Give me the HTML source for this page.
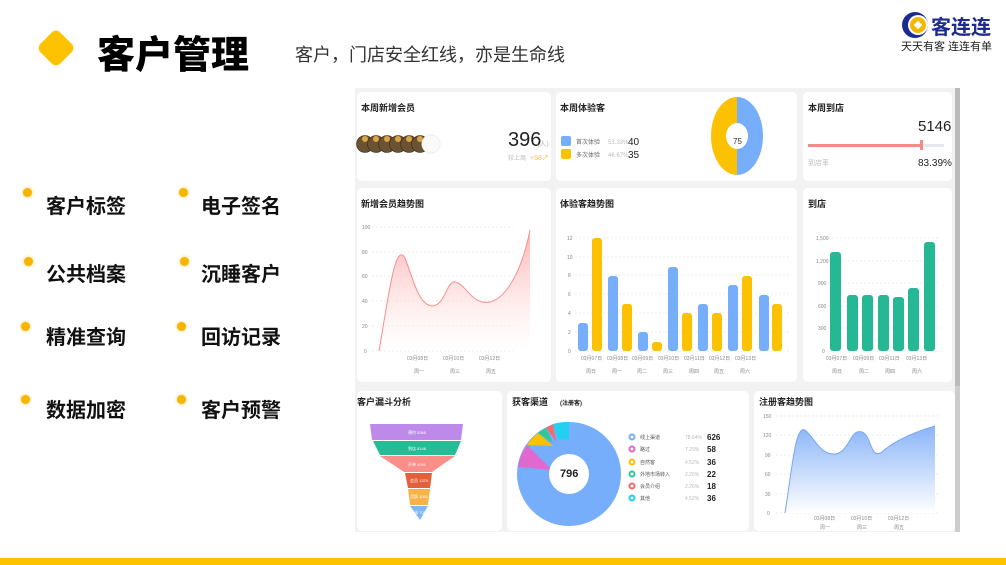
<!DOCTYPE html>
<html><head><meta charset="utf-8"><style>
body{margin:0;width:1006px;height:565px;background:#fff;position:relative;overflow:hidden;font-family:"Liberation Sans","Noto Sans CJK SC",sans-serif}
.t{position:absolute;white-space:nowrap}
.dot{position:absolute;width:9px;height:9px;border-radius:50%;background:#f7b500;box-shadow:0 0 3px #f7c94a}
.li{position:absolute;font-size:20px;font-weight:bold;color:#111}
</style></head><body>
<div style="position:absolute;left:42px;top:34px;width:28px;height:28px;background:#fdc300;border-radius:6px;transform:rotate(45deg)"></div>
<div class="t" style="left:97px;top:24px;font-size:38px;font-weight:900;color:#000">客户管理</div>
<div class="t" style="left:295px;top:41px;font-size:18px;color:#333">客户，门店安全红线，亦是生命线</div>
<svg style="position:absolute;left:898px;top:10px" width="40" height="30"><circle cx="17" cy="15" r="13" fill="#1d2a8f"/><circle cx="20" cy="15" r="10" fill="#fff"/><circle cx="20" cy="15" r="8" fill="#f6b700"/><rect x="17" y="12" width="6" height="6" fill="#fff" transform="rotate(45 20 15)"/></svg>
<div class="t" style="left:931px;top:11px;font-size:20px;font-weight:bold;color:#1d2a8f">客连连</div>
<div class="t" style="left:901px;top:38px;font-size:11px;color:#222">天天有客 连连有单</div>
<div class="dot" style="left:23px;top:188px"></div><div class="li" style="left:46px;top:190px">客户标签</div>
<div class="dot" style="left:179px;top:188px"></div><div class="li" style="left:201px;top:190px">电子签名</div>
<div class="dot" style="left:24px;top:257px"></div><div class="li" style="left:46px;top:258px">公共档案</div>
<div class="dot" style="left:180px;top:257px"></div><div class="li" style="left:201px;top:258px">沉睡客户</div>
<div class="dot" style="left:21px;top:322px"></div><div class="li" style="left:46px;top:321px">精准查询</div>
<div class="dot" style="left:177px;top:322px"></div><div class="li" style="left:201px;top:321px">回访记录</div>
<div class="dot" style="left:21px;top:395px"></div><div class="li" style="left:46px;top:394px">数据加密</div>
<div class="dot" style="left:177px;top:395px"></div><div class="li" style="left:201px;top:394px">客户预警</div>
<div style="position:absolute;left:0;top:558px;width:1006px;height:7px;background:#fdc300"></div>
<svg style="position:absolute;left:0;top:0" width="1006" height="565" font-family="Liberation Sans,Noto Sans CJK SC,sans-serif">
<defs>
<linearGradient id="gr" x1="0" y1="0" x2="0" y2="1"><stop offset="0" stop-color="#f99" stop-opacity=".75"/><stop offset="1" stop-color="#fff" stop-opacity=".3"/></linearGradient>
<linearGradient id="gb" x1="0" y1="0" x2="0" y2="1"><stop offset="0" stop-color="#8ab4f8"/><stop offset="1" stop-color="#fff"/></linearGradient>
</defs>
<rect x="355" y="88" width="605" height="300" fill="#f2f2f2"/>
<rect x="355" y="386" width="605" height="146" fill="#f2f2f2"/>
<rect x="955" y="88" width="5" height="300" fill="#bbb"/>
<g fill="#fff">
<rect x="357" y="92" width="194" height="89" rx="5"/><rect x="556" y="92" width="241" height="89" rx="5"/><rect x="803" y="92" width="149" height="89" rx="5"/>
<rect x="357" y="188" width="194" height="194" rx="5"/><rect x="556" y="188" width="241" height="194" rx="5"/><rect x="803" y="188" width="149" height="194" rx="5"/>
<rect x="357" y="391" width="145" height="140" rx="5"/><rect x="507" y="391" width="242" height="140" rx="5"/><rect x="754" y="391" width="201" height="140" rx="5"/>
</g>
<g font-size="9" font-weight="bold" fill="#222">
<text x="361" y="111">本周新增会员</text><text x="560" y="111">本周体验客</text><text x="808" y="111">本周到店</text>
<text x="361" y="207">新增会员趋势图</text><text x="560" y="207">体验客趋势图</text><text x="808" y="207">到店</text>
<text x="357" y="405">客户漏斗分析</text><text x="512" y="405">获客渠道</text><text x="759" y="405">注册客趋势图</text>
</g>
<g fill="#6b5232" stroke="#3a2a18" stroke-width=".6"><circle cx="365" cy="144" r="8.5"/><circle cx="376" cy="144" r="8.5"/><circle cx="387" cy="144" r="8.5"/><circle cx="398" cy="144" r="8.5"/><circle cx="409" cy="144" r="8.5"/><circle cx="420" cy="144" r="8.5"/></g>
<g fill="#d9a54a"><circle cx="365" cy="139" r="3"/><circle cx="376" cy="139" r="3"/><circle cx="387" cy="139" r="3"/><circle cx="398" cy="139" r="3"/><circle cx="409" cy="139" r="3"/><circle cx="420" cy="139" r="3"/></g>
<circle cx="431" cy="144" r="9" fill="#fafafa" stroke="#eee"/>
<text x="508" y="146" font-size="20" fill="#222">396</text><text x="537" y="146" font-size="7" fill="#bbb">(人)</text>
<text x="508" y="160" font-size="6" fill="#bbb">较上周</text><text x="530" y="160" font-size="7" fill="#f9c23c">+58↗</text>
<rect x="561" y="136" width="10" height="10" rx="2" fill="#76aefb"/><rect x="561" y="149" width="10" height="10" rx="2" fill="#fcc100"/>
<g font-size="6" fill="#666"><text x="576" y="144">首次体验</text><text x="576" y="157">多次体验</text></g>
<g font-size="6" fill="#bbb"><text x="608" y="144">53.33%</text><text x="608" y="157">46.67%</text></g>
<g font-size="10" fill="#222"><text x="628" y="145">40</text><text x="628" y="158">35</text></g>
<path d="M737 97 A26 39 0 0 1 737 175 Z" fill="#76aefb"/><path d="M737 97 A26 39 0 0 0 737 175 Z" fill="#fcc100"/>
<ellipse cx="737" cy="136" rx="11" ry="13" fill="#fff"/><text x="733" y="144" font-size="8" fill="#333">75</text>
<text x="918" y="131" font-size="15" fill="#222">5146</text>
<rect x="808" y="144" width="136" height="3" fill="#e5e7ee"/><rect x="808" y="144" width="113" height="3" fill="#f48b88"/><rect x="920" y="140" width="3" height="10" fill="#f48b88"/>
<text x="808" y="165" font-size="7" fill="#bbb">到店率</text><text x="918" y="166" font-size="10" fill="#222">83.39%</text>
<g stroke="#ddd" stroke-dasharray="2,2" stroke-width=".6"><line x1="372" y1="227" x2="513" y2="227"/><line x1="372" y1="252" x2="513" y2="252"/><line x1="372" y1="276" x2="513" y2="276"/><line x1="372" y1="301" x2="513" y2="301"/><line x1="372" y1="326" x2="513" y2="326"/><line x1="372" y1="351" x2="513" y2="351"/></g>
<g font-size="5" fill="#888"><text x="362" y="229">100</text><text x="362" y="254">80</text><text x="362" y="278">60</text><text x="362" y="303">40</text><text x="362" y="328">20</text><text x="364" y="353">0</text>
<text x="407" y="360">03月08日</text><text x="443" y="360">03月10日</text><text x="479" y="360">03月12日</text><text x="414" y="373">周一</text><text x="450" y="373">周三</text><text x="486" y="373">周五</text></g>
<path d="M379 351 C388 300,395 240,405 258 C412 275,418 305,432 306 C445 306,447 280,455 282 C465 284,470 300,483 302 C500 306,520 280,530 230 L530 351 Z" fill="url(#gr)"/>
<path d="M379 351 C388 300,395 240,405 258 C412 275,418 305,432 306 C445 306,447 280,455 282 C465 284,470 300,483 302 C500 306,520 280,530 230" fill="none" stroke="#f78e8e"/>
<g stroke="#ddd" stroke-dasharray="2,2" stroke-width=".6"><line x1="575" y1="238" x2="790" y2="238"/><line x1="575" y1="257" x2="790" y2="257"/><line x1="575" y1="275" x2="790" y2="275"/><line x1="575" y1="294" x2="790" y2="294"/><line x1="575" y1="313" x2="790" y2="313"/><line x1="575" y1="332" x2="790" y2="332"/><line x1="575" y1="351" x2="790" y2="351"/></g>
<g font-size="5" fill="#888"><text x="567" y="240">12</text><text x="567" y="259">10</text><text x="568" y="277">8</text><text x="568" y="296">6</text><text x="568" y="315">4</text><text x="568" y="334">2</text><text x="568" y="353">0</text>
<text x="581" y="360">03月07日</text><text x="607" y="360">03月08日</text><text x="632" y="360">03月09日</text><text x="658" y="360">03月10日</text><text x="684" y="360">03月11日</text><text x="709" y="360">03月12日</text><text x="735" y="360">03月13日</text>
<text x="586" y="373">周日</text><text x="612" y="373">周一</text><text x="637" y="373">周二</text><text x="663" y="373">周三</text><text x="689" y="373">周四</text><text x="714" y="373">周五</text><text x="740" y="373">周六</text></g>
<g fill="#76aefb"><rect x="578" y="323" width="10" height="28" rx="3"/><rect x="608" y="276" width="10" height="75" rx="3"/><rect x="638" y="332" width="10" height="19" rx="3"/><rect x="668" y="267" width="10" height="84" rx="3"/><rect x="698" y="304" width="10" height="47" rx="3"/><rect x="728" y="285" width="10" height="66" rx="3"/><rect x="759" y="295" width="10" height="56" rx="3"/></g>
<g fill="#fcc100"><rect x="592" y="238" width="10" height="113" rx="3"/><rect x="622" y="304" width="10" height="47" rx="3"/><rect x="652" y="342" width="10" height="9" rx="3"/><rect x="682" y="313" width="10" height="38" rx="3"/><rect x="712" y="313" width="10" height="38" rx="3"/><rect x="742" y="276" width="10" height="75" rx="3"/><rect x="772" y="304" width="10" height="47" rx="3"/></g>
<g stroke="#ddd" stroke-dasharray="2,2" stroke-width=".6"><line x1="828" y1="238" x2="940" y2="238"/><line x1="828" y1="261" x2="940" y2="261"/><line x1="828" y1="283" x2="940" y2="283"/><line x1="828" y1="306" x2="940" y2="306"/><line x1="828" y1="328" x2="940" y2="328"/><line x1="828" y1="351" x2="940" y2="351"/></g>
<g font-size="5" fill="#888"><text x="816" y="240">1,500</text><text x="816" y="263">1,200</text><text x="818" y="285">900</text><text x="818" y="308">600</text><text x="818" y="330">300</text><text x="822" y="353">0</text>
<text x="826" y="360">03月07日</text><text x="853" y="360">03月09日</text><text x="879" y="360">03月11日</text><text x="906" y="360">03月13日</text><text x="832" y="373">周日</text><text x="859" y="373">周二</text><text x="885" y="373">周四</text><text x="912" y="373">周六</text></g>
<g fill="#26b894"><rect x="830" y="252" width="11" height="99" rx="3"/><rect x="847" y="295" width="11" height="56" rx="3"/><rect x="862" y="295" width="11" height="56" rx="3"/><rect x="878" y="295" width="11" height="56" rx="3"/><rect x="893" y="297" width="11" height="54" rx="3"/><rect x="908" y="288" width="11" height="63" rx="3"/><rect x="924" y="242" width="11" height="109" rx="3"/></g>
<polygon points="370,424 463,424 461,440 372,440" fill="#bd8ae9"/>
<polygon points="373,441 461,441 455,455 380,455" fill="#26bd96"/>
<polygon points="380,456 455,456 432,472 404,472" fill="#fa8e89"/>
<polygon points="405,473 432,473 430,488 408,488" fill="#e2613a"/>
<polygon points="408,489 430,489 428,505 410,505" fill="#f7b34a"/>
<polygon points="410,506 428,506 420,520" fill="#7fb6f8"/>
<g font-size="4" fill="#fff"><text x="408" y="434">预约 5365</text><text x="408" y="450">到店 5146</text><text x="408" y="466">开单 4291</text><text x="410" y="482">会员 1370</text><text x="410" y="498">活跃 1051</text><text x="410" y="514">忠诚 703</text></g>
<circle cx="569" cy="474" r="34" fill="none" stroke="#76aefb" stroke-width="36"/>
<path d="M569 422 A52 52 0 0 0 553 424 L558 440 A18 18 0 0 1 569 440Z" fill="#23d0f0"/>
<path d="M553 424 A52 52 0 0 0 546 428 L556 441 Z" fill="#f46b6b"/>
<path d="M546 428 A52 52 0 0 0 538 433 L553 443Z" fill="#33c891"/>
<path d="M538 433 A52 52 0 0 0 527 445 L553 446 Z" fill="#fcc100"/>
<path d="M527 445 A52 52 0 0 0 518 467 L552 470 Z" fill="#e168cf"/>
<circle cx="569" cy="474" r="20" fill="#fff"/>
<text x="560" y="477" font-size="11" font-weight="bold" fill="#222">796</text>
<text x="560" y="405" font-size="6" fill="#222" font-weight="bold">(注册客)</text>
<g fill="none" stroke-width="2"><circle cx="632" cy="437" r="2.5" stroke="#76aefb"/><circle cx="632" cy="449" r="2.5" stroke="#e168cf"/><circle cx="632" cy="462" r="2.5" stroke="#fcc100"/><circle cx="632" cy="474" r="2.5" stroke="#33c891"/><circle cx="632" cy="486" r="2.5" stroke="#f46b6b"/><circle cx="632" cy="498" r="2.5" stroke="#23d0f0"/></g>
<g font-size="5" fill="#555"><text x="640" y="439">线上渠道</text><text x="640" y="451">路过</text><text x="640" y="464">自然客</text><text x="640" y="476">外地市场转入</text><text x="640" y="488">会员介绍</text><text x="640" y="500">其他</text></g>
<g font-size="5" fill="#bbb"><text x="685" y="439">78.64%</text><text x="685" y="451">7.29%</text><text x="685" y="464">4.52%</text><text x="685" y="476">2.26%</text><text x="685" y="488">2.26%</text><text x="685" y="500">4.52%</text></g>
<g font-size="8" font-weight="bold" fill="#222"><text x="707" y="440">626</text><text x="707" y="452">58</text><text x="707" y="465">36</text><text x="707" y="477">22</text><text x="707" y="489">18</text><text x="707" y="501">36</text></g>
<g stroke="#ddd" stroke-dasharray="2,2" stroke-width=".6"><line x1="776" y1="416" x2="940" y2="416"/><line x1="776" y1="435" x2="940" y2="435"/><line x1="776" y1="455" x2="940" y2="455"/><line x1="776" y1="474" x2="940" y2="474"/><line x1="776" y1="494" x2="940" y2="494"/><line x1="776" y1="513" x2="940" y2="513"/></g>
<g font-size="5" fill="#888"><text x="763" y="418">150</text><text x="763" y="437">120</text><text x="765" y="457">90</text><text x="765" y="476">60</text><text x="765" y="496">30</text><text x="767" y="515">0</text>
<text x="814" y="520">03月08日</text><text x="851" y="520">03月10日</text><text x="888" y="520">03月12日</text><text x="820" y="529">周一</text><text x="857" y="529">周三</text><text x="894" y="529">周五</text></g>
<path d="M785 513 C792 470,795 425,805 430 C815 438,820 455,835 454 C850 452,850 428,862 432 C872 436,870 460,882 452 C895 440,915 432,935 426 L935 513 Z" fill="url(#gb)"/>
<path d="M785 513 C792 470,795 425,805 430 C815 438,820 455,835 454 C850 452,850 428,862 432 C872 436,870 460,882 452 C895 440,915 432,935 426" fill="none" stroke="#7aa7f2"/>
<rect x="955" y="386" width="5" height="146" fill="#ccc"/>
</svg>
</body></html>
